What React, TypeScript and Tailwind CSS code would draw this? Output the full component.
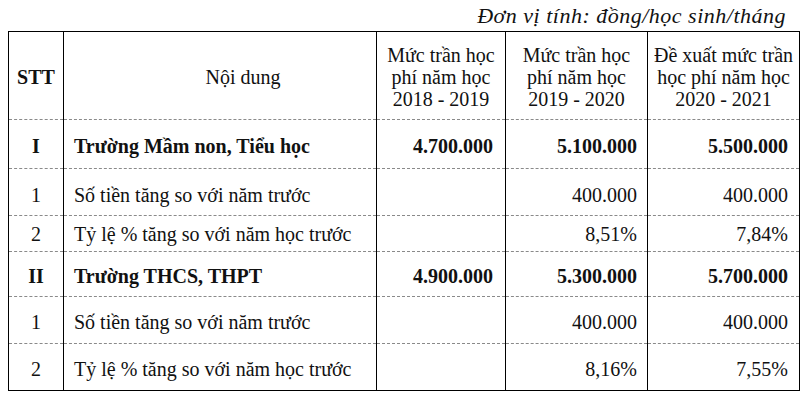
import React from "react";

type Row = {
  stt: string;
  label: string;
  a: string;
  b: string;
  c: string;
  bold?: boolean;
  h: string;
  pt: string;
};

const rows: Row[] = [
  { stt: "I", label: "Trường Mầm non, Tiểu học", a: "4.700.000", b: "5.100.000", c: "5.500.000", bold: true, h: "h-[49px]", pt: "pt-[4px]" },
  { stt: "1", label: "Số tiền tăng so với năm trước", a: "", b: "400.000", c: "400.000", h: "h-[47px]", pt: "pt-[5px]" },
  { stt: "2", label: "Tỷ lệ % tăng so với năm học trước", a: "", b: "8,51%", c: "7,84%", h: "h-[36px]", pt: "pt-[1px]" },
  { stt: "II", label: "Trường THCS, THPT", a: "4.900.000", b: "5.300.000", c: "5.700.000", bold: true, h: "h-[45px]", pt: "pt-[4px]" },
  { stt: "1", label: "Số tiền tăng so với năm trước", a: "", b: "400.000", c: "400.000", h: "h-[47px]", pt: "pt-[4px]" },
  { stt: "2", label: "Tỷ lệ % tăng so với năm học trước", a: "", b: "8,16%", c: "7,55%", h: "h-[47px]", pt: "pt-[4px]" },
];

const cell =
  "border-x border-t border-x-black border-t-[#8a8a8a] border-dashed [border-left-style:solid] [border-right-style:solid] align-middle";

export default function App() {
  return (
    <div
      className="w-[809px] h-[404px] bg-white text-[#111] overflow-hidden"
      style={{ fontFamily: '"Liberation Serif", "Times New Roman", serif' }}
    >
      <div className="h-[31px] flex items-start justify-end pr-[23px] pt-[5px] text-[22px] leading-[22px] italic tracking-[0.5px]">
        Đơn vị tính: đồng/học sinh/tháng
      </div>
      <table className="ml-[8px] w-[791px] table-fixed border-collapse border border-black text-[20px] leading-[22px]">
        <colgroup>
          <col className="w-[55px]" />
          <col className="w-[313px]" />
          <col className="w-[129px]" />
          <col className="w-[142px]" />
          <col className="w-[152px]" />
        </colgroup>
        <thead>
          <tr className="h-[88px]">
            <th className="border-x border-black font-bold text-center align-middle pt-[3px]">STT</th>
            <th className="border-x border-black font-normal text-center align-middle pl-[46px] pt-[3px]">Nội dung</th>
            <th className="border-x border-black font-normal text-center align-middle pt-[3px]">
              Mức trần học
              <br />
              phí năm học
              <br />
              2018 - 2019
            </th>
            <th className="border-x border-black font-normal text-center align-middle pt-[3px]">
              Mức trần học
              <br />
              phí năm học
              <br />
              2019 - 2020
            </th>
            <th className="border-x border-black font-normal text-center align-middle pt-[3px]">
              Đề xuất mức trần
              <br />
              học phí năm học
              <br />
              2020 - 2021
            </th>
          </tr>
        </thead>
        <tbody>
          {rows.map((r, i) => (
            <tr key={i} className={r.h}>
              <td className={`${cell} ${r.pt} text-center ${r.bold ? "font-bold" : ""}`}>{r.stt}</td>
              <td className={`${cell} ${r.pt} pl-[10px] ${r.bold ? "font-bold" : ""}`}>{r.label}</td>
              <td className={`${cell} ${r.pt} text-right pr-[12px] ${r.bold ? "font-bold" : ""}`}>{r.a}</td>
              <td className={`${cell} ${r.pt} text-right pr-[10px] ${r.bold ? "font-bold" : ""}`}>{r.b}</td>
              <td className={`${cell} ${r.pt} text-right pr-[11px] ${r.bold ? "font-bold" : ""}`}>{r.c}</td>
            </tr>
          ))}
        </tbody>
      </table>
    </div>
  );
}
